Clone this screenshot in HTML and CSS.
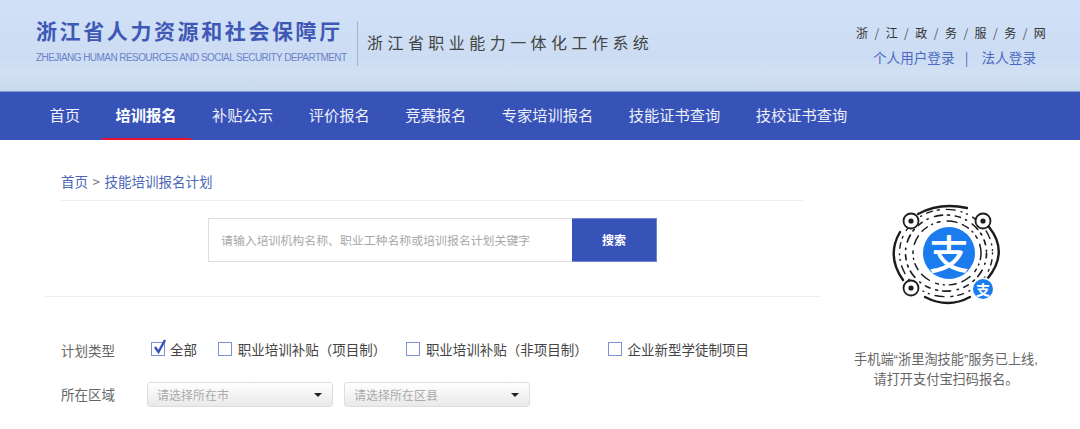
FILE: index.html
```html
<!DOCTYPE html>
<html lang="zh-CN">
<head>
    <meta charset="UTF-8">
    <meta name="viewport" content="width=device-width, initial-scale=1.0">
    <title>浙江省职业能力一体化工作系统</title>
    <link rel="stylesheet" href="styles.css">
</head>
<body>
    <div class="header">
        <div class="logo">
            <div class="logo-cn">浙江省人力资源和社会保障厅</div>
            <div class="logo-en">ZHEJIANG HUMAN RESOURCES AND SOCIAL SECURITY DEPARTMENT</div>
        </div>
        <div class="system-name">浙江省职业能力一体化工作系统</div>
        <div class="header-right">
            <div class="gov-link">
                <span>浙</span><i>/</i><span>江</span><i>/</i><span>政</span><i>/</i><span>务</span><i>/</i><span>服</span><i>/</i><span>务</span><i>/</i><span>网</span>
            </div>
            <div class="login-links">
                <a>个人用户登录</a><em>|</em><a>法人登录</a>
            </div>
        </div>
    </div>

    <div class="nav">
        <a>首页</a>
        <a class="active">培训报名</a>
        <a>补贴公示</a>
        <a>评价报名</a>
        <a>竞赛报名</a>
        <a>专家培训报名</a>
        <a>技能证书查询</a>
        <a>技校证书查询</a>
    </div>

    <div class="main">
        <div class="content">
            <div class="crumb"><a>首页</a> <span>&gt;</span> <a>技能培训报名计划</a></div>
            <div class="search">
                <div class="search-input">请输入培训机构名称、职业工种名称或培训报名计划关键字</div>
                <div class="search-btn">搜索</div>
            </div>
            <div class="filters">
                <div class="filter-row">
                    <div class="filter-label">计划类型</div>
                    <div class="check-item check-all">
                        <span class="box">
                            <svg width="18" height="18" viewBox="0 0 18 18"><path d="M4 8l3.500 5L14 1" fill="none" stroke="#3853b8" stroke-width="2.4"/></svg>
                        </span>全部
                    </div>
                    <div class="check-item"><span class="box"></span>职业培训补贴（项目制）</div>
                    <div class="check-item"><span class="box"></span>职业培训补贴（非项目制）</div>
                    <div class="check-item"><span class="box"></span>企业新型学徒制项目</div>
                </div>
                <div class="filter-row select-row">
                    <div class="filter-label">所在区域</div>
                    <div class="select">请选择所在市</div>
                    <div class="select">请选择所在区县</div>
                </div>
            </div>
        </div>

        <div class="side">
            <svg class="qr" width="160" height="125" viewBox="6 0 160 125">
                <!-- outer arcs -->
                <g fill="none" stroke="#1c1c1c" stroke-linecap="round">
                    <path stroke-width="2.4" d="M58 24Q80 12 107 18"/>
                    <path stroke-width="2.4" d="M129 37Q149 62 128 88"/>
                    <path stroke-width="2.4" d="M40 42Q26 66 43 90"/>
                    <path stroke-width="2.4" d="M65 107Q88 119 110 107"/>
                    <!-- rings of dots and dashes -->
                    <g transform="translate(0 3.800) scale(1 .94)">
                        <circle cx="86" cy="63" r="46.500" stroke-width="1.400" stroke-dasharray="1 6 6 5 2 7 9 6 1 5"/>
                        <circle cx="86" cy="63" r="40.500" stroke-width="1.700" stroke-dasharray="5 6 1 7 8 5 2 6"/>
                        <circle cx="87" cy="63" r="34" stroke-width="1.500" stroke-dasharray="7 5 1 5 3 7 10 6"/>
                    </g>
                    <!-- corner eyes -->
                    <circle cx="51" cy="31" r="7.500" fill="#fff" stroke-width="1.800"/>
                    <circle cx="123" cy="31" r="7.500" fill="#fff" stroke-width="1.800"/>
                    <circle cx="51" cy="98" r="7.500" fill="#fff" stroke-width="1.800"/>
                </g>
                <circle cx="51" cy="31" r="2.600" fill="#1c1c1c"/>
                <circle cx="123" cy="31" r="2.600" fill="#1c1c1c"/>
                <circle cx="51" cy="98" r="2.600" fill="#1c1c1c"/>
                <!-- alipay mark -->
                <circle cx="89" cy="63" r="27" fill="#fff"/>
                <circle cx="89" cy="63" r="26" fill="#1b7cf0"/>
                <text class="qr-big" x="89" y="79">支</text>
                <circle cx="123" cy="99" r="11.500" fill="#fff"/>
                <circle cx="123" cy="99" r="10" fill="#1b7cf0"/>
                <text class="qr-small" x="123" y="104.500">支</text>
            </svg>
            <p class="side-text">手机端“浙里淘技能”服务已上线,<br>请打开支付宝扫码报名。</p>
        </div>
    </div>
</body>
</html>
```

FILE: styles.css
```css
body {
    margin: 0;
    padding: 0;
    background: #fff;
    font-family: "Microsoft YaHei", "Noto Sans CJK SC", "Liberation Sans", sans-serif;
    overflow: hidden;
}
a {
    cursor: pointer;
}

/* top banner */
.header {
    height: 92px;
    box-sizing: border-box;
    display: flex;
    align-items: flex-start;
    padding-left: 36px;
    background: linear-gradient(180deg, #d0e1f8 0%, #cbdcf3 62%, #d2e0f3 80%, #c9daf0 100%);
    border-bottom: 1px solid #7f95d3;
}
.logo {
    width: 321px;
    height: 45px;
    margin-top: 21px;
    border-right: 1px solid #9fb3dd;
}
.logo-cn {
    font-size: 21px;
    line-height: 18px;
    font-weight: 700;
    letter-spacing: 2.6px;
    white-space: nowrap;
    color: #3f58b6;
}
.logo-en {
    margin-top: 12px;
    font-family: "Liberation Sans", Arial, sans-serif;
    font-size: 10px;
    line-height: 14px;
    letter-spacing: -0.56px;
    white-space: nowrap;
    color: #6b82c8;
}
.system-name {
    margin: 32px 0 0 9px;
    font-size: 16px;
    line-height: 20px;
    letter-spacing: 4.45px;
    white-space: nowrap;
    color: #444;
}
.header-right {
    margin-left: auto;
    width: 224px;
    padding-top: 25px;
    text-align: center;
}
.gov-link {
    width: 190px;
    display: flex;
    justify-content: space-between;
    font-size: 12px;
    line-height: 15px;
    color: #333;
}
.gov-link i {
    font-style: normal;
    color: #555;
}
.login-links {
    width: 163px;
    margin: 8px 0 0 17px;
    display: flex;
    justify-content: space-between;
    font-size: 13.6px;
    line-height: 18px;
    color: #4c69bf;
}
.login-links em {
    margin-right: 3px;
    font-style: normal;
}

/* main menu */
.nav {
    height: 48px;
    display: flex;
    gap: 7.55px;
    padding-left: 35.5px;
    background: #3853b8;
}
.nav a {
    padding: 0 14px;
    font-size: 15.25px;
    line-height: 45px;
    color: #eef1fb;
    white-space: nowrap;
}
.nav a.active {
    font-weight: 700;
    color: #fff;
    box-sizing: border-box;
    height: 48px;
    border-bottom: 2px solid #e8102c;
}

/* page body */
.main {
    display: flex;
    padding-left: 45px;
}
.content {
    width: 776px;
}
.crumb {
    margin: 0 18px 0 16px;
    height: 61px;
    box-sizing: border-box;
    padding-top: 31px;
    font-size: 13.5px;
    line-height: 20px;
    color: #4a65b8;
    border-bottom: 1px solid #eee;
}
.crumb span {
    margin: 0 1.5px;
    color: #777;
}
.search {
    display: flex;
    padding: 17px 0 34px 163px;
    border-bottom: 1px solid #eee;
}
.search-input {
    width: 364px;
    height: 44px;
    box-sizing: border-box;
    padding-left: 12px;
    font-size: 11.9px;
    line-height: 42px;
    color: #a8a8a8;
    border: 1px solid #ddd;
    border-right: 0;
}
.search-btn {
    width: 85px;
    height: 44px;
    box-sizing: border-box;
    font-size: 12px;
    font-weight: 700;
    line-height: 42px;
    text-align: center;
    color: #fff;
    background: #3853b8;
    border: 1px solid #6f85d0;
    border-left: 0;
}

/* filters */
.filters {
    padding: 41px 0 0 16px;
}
.filter-row {
    display: flex;
    align-items: center;
    height: 22px;
    font-size: 13.5px;
    color: #444;
}
.select-row {
    height: 26px;
    margin-top: 21px;
    gap: 11px;
}
.filter-label {
    width: 90px;
    color: #666;
    margin-top: 2px;
}
.select-row .filter-label {
    width: 86px;
    margin-right: -11px;
    margin-top: 0;
}
.check-item {
    display: flex;
    align-items: center;
    margin-right: 19.7px;
    white-space: nowrap;
}
.box {
    width: 12px;
    height: 12px;
    margin-right: 6px;
    border: 1px solid #7d90d6;
    position: relative;
}
.box svg {
    position: absolute;
    left: -1px;
    top: -4px;
}
.check-all {
    margin-right: 20.7px;
}
.check-all .box {
    margin-right: 5px;
}
.select {
    width: 186px;
    height: 25px;
    box-sizing: border-box;
    padding-left: 9px;
    font-size: 12px;
    line-height: 23px;
    color: #aaa;
    border: 1px solid #ddd;
    border-radius: 3px;
    background: linear-gradient(180deg, #fff 0%, #e9e9e9 100%);
    position: relative;
}
.select::after {
    content: "";
    position: absolute;
    right: 10px;
    top: 10px;
    border: 4px solid transparent;
    border-top-color: #222;
    border-bottom: 0;
}

/* qr code column */
.side {
    width: 250px;
    text-align: center;
}
.qr {
    display: block;
    margin: 50px auto 0;
}
.qr-big {
    font-size: 40px;
    font-weight: 500;
    text-anchor: middle;
    fill: #fff;
}
.qr-small {
    font-size: 14px;
    font-weight: 700;
    text-anchor: middle;
    fill: #fff;
}
.side-text {
    margin: 35px 0 0;
    font-family: "Liberation Sans", "Noto Sans CJK SC", sans-serif;
    font-size: 13.2px;
    line-height: 20px;
    color: #666;
}
```
